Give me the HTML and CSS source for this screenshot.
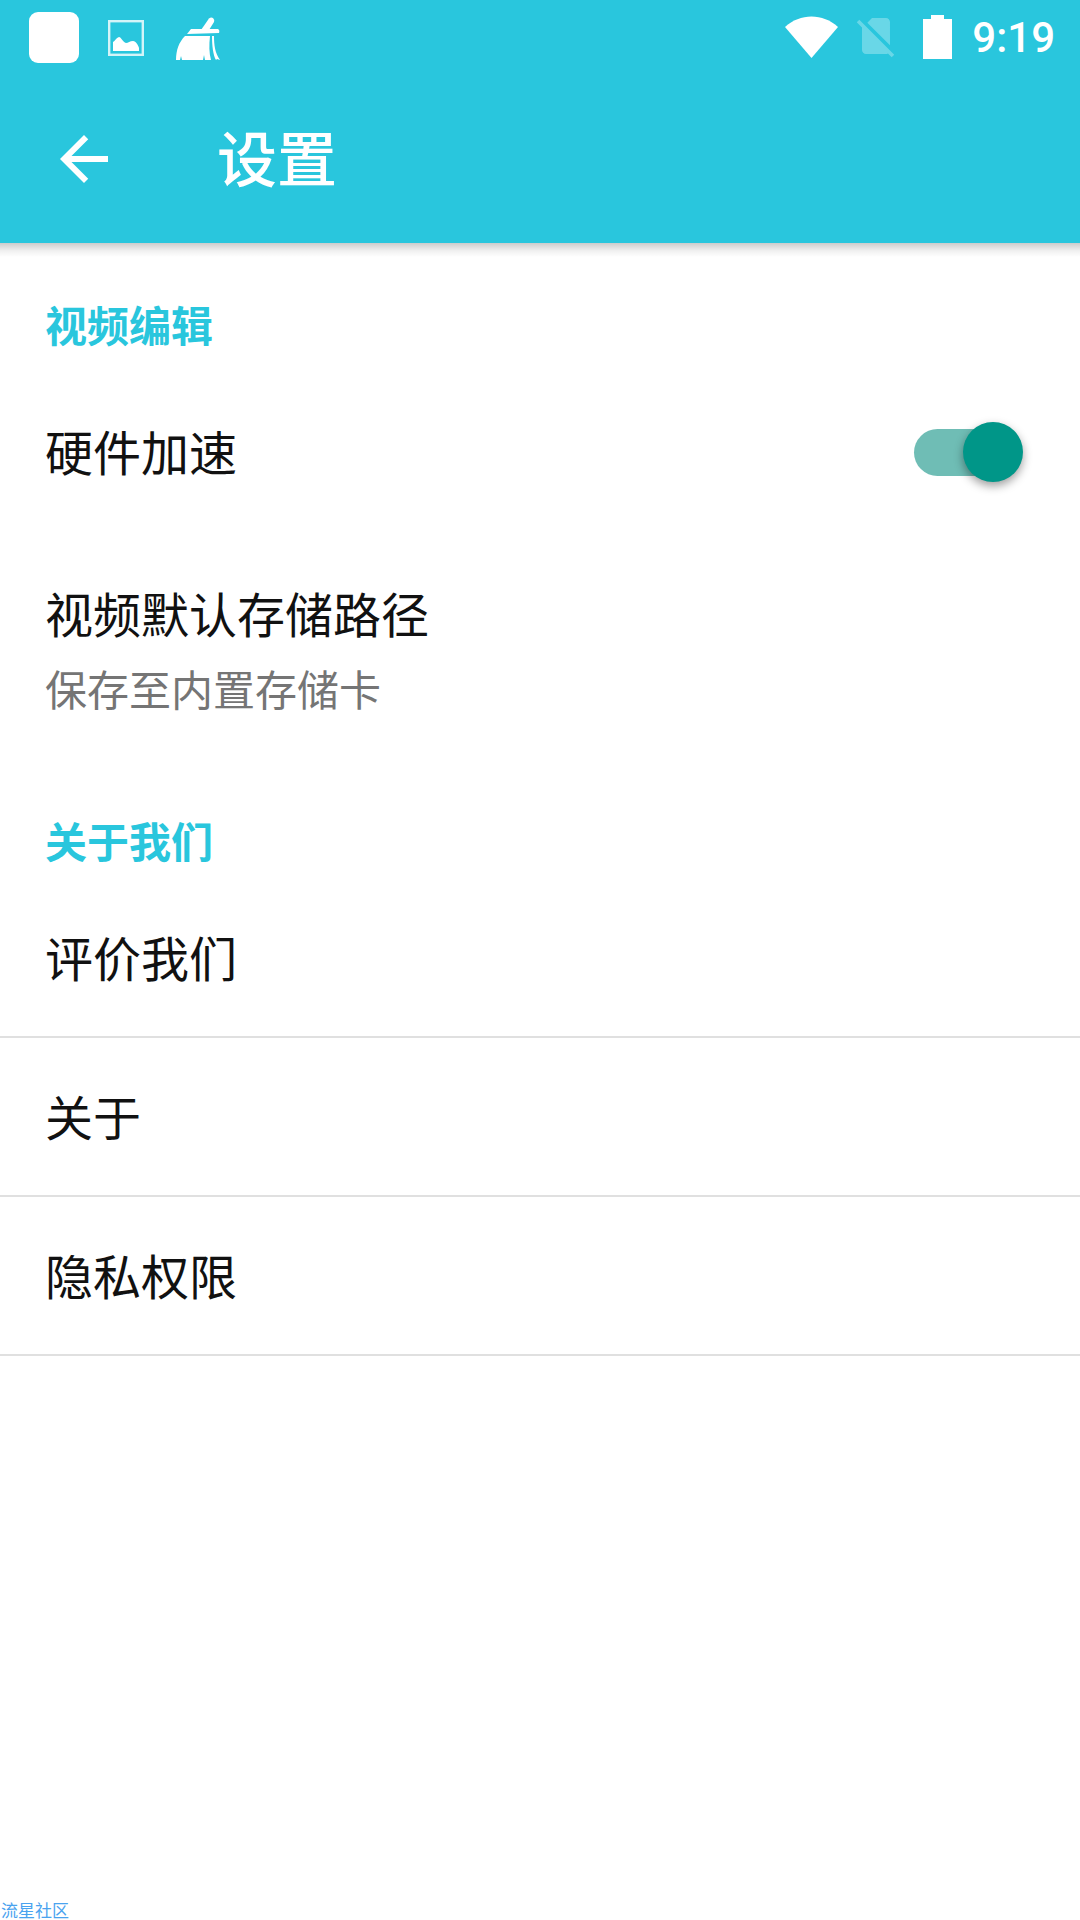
FILE: index.html
```html
<!DOCTYPE html>
<html lang="zh-CN">
<head>
<meta charset="utf-8">
<title>设置</title>
<link rel="stylesheet" href="styles.css">
</head>
<body>
<div class="screen">
  <header class="appbar">
    <div class="status">
      <div class="status-left">
        <div class="app-square"></div>
        <svg class="ic-image" viewBox="0 0 36 36"><rect x="1.200" y="1.200" width="33.600" height="33.600" fill="none" stroke="#fff" stroke-opacity=".8" stroke-width="2.400"/><path d="M5 31V22c2-1 3-4 6-5 2 0 4 5 7 6 2 0 4-2 7-2 3 0 5 4 6 7v3z" fill="#fff"/></svg>
        <svg class="ic-broom" viewBox="0 0 44 44"><path d="M25 13 33 1.500Q35 0 37 1 39 3 38 5L33 13z" fill="#fff"/><path d="M15 12H42Q44 13 43 16L11 17z" fill="#fff"/><path d="M9 19H34C33 28 33 36 35 43H29L28 38 27 43H6L5 39 4 43H0C0 33 3 25 9 19z" fill="#fff"/><path d="M36 19H38C38 28 39 36 44 43L41 42 40 43C37 38 36 28 36 19z" fill="#fff"/></svg>
      </div>
      <div class="status-right">
        <svg class="ic-wifi" viewBox="0 0 53 42"><path d="M0 11C15-3 38-3 53 11L26.500 42z" fill="#fff"/></svg>
        <svg class="ic-sim" viewBox="0 0 24 24"><path d="M18.990 5c0-1.100-.890-2-1.990-2h-7L7.660 5.340 19 16.680 18.990 5zM3.650 3.880L2.380 5.150 5 7.770V19c0 1.100.900 2 2 2h10.010c.350 0 .670-.100.960-.260l1.880 1.880 1.270-1.270L3.650 3.880z" fill="#fff" fill-opacity=".3"/></svg>
        <svg class="ic-battery" viewBox="0 0 29 44"><path d="M8 0H21V4H29V44H0V4H8z" fill="#fff"/></svg>
        <span class="clock">9:19</span>
      </div>
    </div>
    <div class="toolbar">
      <svg class="ic-back" viewBox="0 0 24 24"><path d="M20 11H7.830l5.590-5.590L12 4l-8 8 8 8 1.410-1.410L7.830 13H20v-2z" fill="#fff"/></svg>
      <h1 class="title">设置</h1>
    </div>
  </header>

  <main class="list">
    <h2 class="category cat-first">视频编辑</h2>
    <div class="row row-switch">
      <span class="row-title">硬件加速</span>
      <div class="switch"><div class="switch-track"></div><div class="switch-thumb"></div></div>
    </div>
    <div class="row-double">
      <div class="row-title">视频默认存储路径</div>
      <div class="row-sub">保存至内置存储卡</div>
    </div>
    <h2 class="category cat-second">关于我们</h2>
    <div class="row row-line"><span class="row-title">评价我们</span></div>
    <div class="row row-line"><span class="row-title">关于</span></div>
    <div class="row row-line"><span class="row-title">隐私权限</span></div>
  </main>

  <footer class="watermark">流星社区</footer>
</div>
</body>
</html>
```
FILE: styles.css
```css
* { box-sizing: border-box; margin: 0; padding: 0; }
html, body { width: 1080px; height: 1920px; overflow: hidden; background: #fff; }
body { font-family: "Noto Sans CJK SC", "Noto Sans", sans-serif; color: #111; }
.screen { width: 1080px; height: 1920px; display: flex; flex-direction: column; overflow: hidden; }

.appbar { height: 243px; background: #29c6dd; color: #fff; flex: none; position: relative; z-index: 1; }
.appbar::after { content: ""; position: absolute; left: 0; right: 0; top: 100%; height: 14px; background: linear-gradient(rgba(0,0,0,.2), rgba(0,0,0,.06) 55%, rgba(0,0,0,0)); }
.status { height: 72px; display: flex; justify-content: space-between; align-items: flex-start; padding: 0 25px 0 29px; }
.status-left { display: flex; align-items: flex-start; }
.status-right { display: flex; align-items: flex-start; }
.app-square { width: 50px; height: 51px; background: #fff; border-radius: 9px; margin-top: 12px; }
.ic-image { width: 36px; height: 36px; margin: 20px 0 0 29px; }
.ic-broom { width: 44px; height: 44px; margin: 17px 0 0 32px; }
.ic-wifi { width: 53px; height: 42px; margin-top: 16px; }
.ic-sim { width: 48px; height: 48px; margin: 12px 0 0 14px; }
.ic-battery { width: 29px; height: 44px; margin: 15px 0 0 23px; }
.clock { font: 500 42px/50px Roboto, sans-serif; margin: 13px 0 0 20px; }

.toolbar { height: 171px; display: flex; align-items: flex-start; padding-left: 48px; }
.ic-back { width: 72px; height: 72px; margin-top: 51px; }
.title { font-size: 60px; font-weight: 500; line-height: 80px; margin: 44px 0 0 97px; }

.list { flex: 1; display: flex; flex-direction: column; }
.category { font-size: 42px; font-weight: 700; line-height: 60px; color: #29c6dd; padding-left: 45px; }
.cat-first { margin-top: 51px; }
.cat-second { margin: 83px 0 9px; }
.row { display: flex; align-items: center; padding-left: 45px; }
.row-switch { height: 183px; padding-top: 9px; justify-content: space-between; padding-right: 57px; }
.row-title { font-size: 48px; line-height: 72px; color: #111; }
.row-double { padding: 39px 0 0 45px; }
.row-sub { font-size: 42px; line-height: 78px; margin-top: 1px; color: #757575; }
.row-line { height: 159px; padding-bottom: 4px; border-bottom: 2px solid #e0e0e0; }

.switch { width: 109px; height: 60px; position: relative; margin-top: 4px; }
.switch-track { width: 94px; height: 47px; background: #6fbdb5; border-radius: 24px; margin-top: 7px; }
.switch-thumb { position: absolute; right: 0; top: 0; width: 60px; height: 60px; background: #009688; border-radius: 50%; box-shadow: 0 4px 10px rgba(0,0,0,.38); }

.watermark { font-size: 17px; line-height: 20px; color: #4aa3ef; padding-left: 1px; height: 20px; flex: none; margin-top: auto; }
```
